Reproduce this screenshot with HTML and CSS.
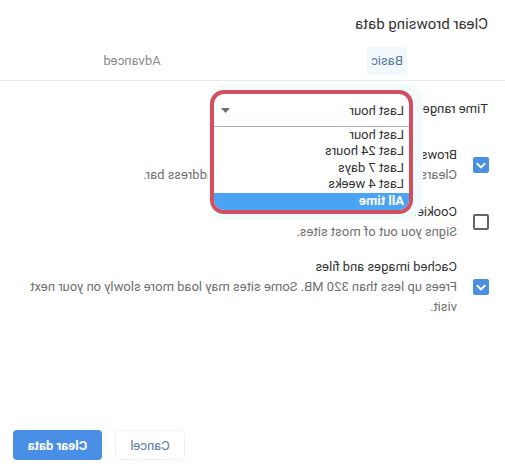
FILE: index.html
```html
<!DOCTYPE html>
<html>
<head>
<meta charset="utf-8">
<link rel="stylesheet" href="styles.css">
</head>
<body>
<div class="page">
  <div class="dialog">
    <div class="title">Clear browsing data</div>
    <div class="tabs">
      <div class="tab tab-basic active"><span class="tab-label">Basic</span></div>
      <div class="tab tab-adv"><span class="tab-label">Advanced</span></div>
    </div>
    <div class="content">
      <div class="time-row">
        <span class="label">Time range</span>
        <div class="select-wrap">
          <div class="popup">
            <div class="sel">
              <span>Last hour</span>
              <svg class="arrow" width="9" height="5" viewBox="0 0 9 5"><path d="M0 0H9L4.5 5Z" fill="#6b6b6b"/></svg>
            </div>
            <div class="list">
              <div class="item">Last hour</div>
              <div class="item">Last 24 hours</div>
              <div class="item">Last 7 days</div>
              <div class="item">Last 4 weeks</div>
              <div class="item selected">All time</div>
            </div>
          </div>
        </div>
      </div>
      <div class="opt opt-1">
        <div class="cb checked"><svg width="16" height="16" viewBox="0 0 16 16"><path d="M3.8 6.2L8 10.4L12.2 6.2" fill="none" stroke="#fff" stroke-width="2"/></svg></div>
        <div class="opt-text">
          <div class="opt-title">Browsing history</div>
          <div class="opt-sub">Clears history and autocompletions in the address bar.</div>
        </div>
      </div>
      <div class="opt opt-2">
        <div class="cb"></div>
        <div class="opt-text">
          <div class="opt-title">Cookies and other site data</div>
          <div class="opt-sub">Signs you out of most sites.</div>
        </div>
      </div>
      <div class="opt opt-3">
        <div class="cb checked"><svg width="16" height="16" viewBox="0 0 16 16"><path d="M3.8 6.2L8 10.4L12.2 6.2" fill="none" stroke="#fff" stroke-width="2"/></svg></div>
        <div class="opt-text">
          <div class="opt-title">Cached images and files</div>
          <div class="opt-sub">Frees up less than 320 MB. Some sites may load more slowly on your next visit.</div>
        </div>
      </div>
    </div>
    <div class="buttons">
      <button class="btn btn-cancel">Cancel</button>
      <button class="btn btn-primary">Clear data</button>
    </div>
  </div>
</div>
</body>
</html>
```

FILE: styles.css
```css
html, body {
  margin: 0;
  padding: 0;
  background: #fff;
  overflow: hidden;
}
.page {
  width: 505px;
  height: 472px;
  transform: scaleX(-1);
  font-family: Roboto, "Liberation Sans", sans-serif;
  color: #333;
}
.dialog {
  height: 472px;
  box-sizing: border-box;
  display: flex;
  flex-direction: column;
  padding-top: 14px;
  padding-bottom: 12px;
}
.title {
  font-size: 15px;
  line-height: 20px;
  padding-left: 17px;
  color: #333;
}
.tabs {
  margin-top: 8px;
  height: 38px;
  display: flex;
  border-bottom: 1px solid #e4ebf0;
}
.tab {
  font-size: 13px;
  line-height: 38px;
  display: flex;
  justify-content: center;
  align-items: center;
  color: #8a8a8a;
}
.tab-basic {
  width: 236px;
  color: #5878a0;
}
.tab-basic .tab-label {
  background: #f1f9fc;
  line-height: 28px;
  padding: 0 4px;
}
.tab-adv {
  width: 256px;
  margin-left: 9px;
}
.content {
  display: flex;
  flex-direction: column;
}
.time-row {
  display: flex;
  align-items: center;
  padding-top: 18px;
  height: 20px;
  margin-bottom: 26px;
  padding-left: 17px;
  font-size: 13px;
}
.label {
  width: 75px;
  color: #333;
  line-height: 20px;
}
.select-wrap {
  position: relative;
  height: 20px;
  width: 203px;
}
.popup {
  position: absolute;
  top: -9px;
  left: 0;
  width: 203px;
  height: 124px;
  box-sizing: border-box;
  border: 4px solid #d24f5f;
  border-radius: 14px;
  overflow: hidden;
  background: #fff;
  box-shadow: -4px 0 0 6px #f2fafc;
  z-index: 2;
}
.sel {
  height: 32px;
  display: flex;
  align-items: center;
  justify-content: space-between;
  padding-left: 5px;
  padding-right: 7px;
  border-bottom: 1px solid #a5adbd;
  font-size: 13px;
  color: #333;
}
.arrow {
  display: block;
}
.list {
  display: flex;
  flex-direction: column;
}
.item {
  height: 16.4px;
  line-height: 16.4px;
  padding-left: 5px;
  font-size: 13px;
  color: #333;
}
.item.selected {
  background: #4aa3f3;
  color: #fff;
  font-weight: bold;
  height: 17px;
}
.opt {
  display: flex;
  align-items: center;
  padding-left: 16px;
  font-size: 13px;
  line-height: 20px;
}
.opt-1 { margin-bottom: 17px; }
.opt-2 { margin-bottom: 15px; }
.cb {
  width: 16px;
  height: 16px;
  box-sizing: border-box;
  border: 2px solid #666;
  border-radius: 2px;
  flex: none;
  margin-right: 16px;
}
.cb.checked {
  border: none;
  background: #4a8fe2;
}
.cb svg {
  display: block;
}
.opt-text {
  width: 432px;
}
.opt-title {
  color: #333;
}
.opt-sub {
  color: #707070;
}
.buttons {
  margin-top: auto;
  display: flex;
  justify-content: flex-end;
  gap: 13px;
  padding-right: 13px;
}
.btn {
  height: 30px;
  font-family: Roboto, "Liberation Sans", sans-serif;
  font-size: 13px;
  border-radius: 4px;
  padding: 0;
  cursor: pointer;
}
.btn-cancel {
  width: 70px;
  background: #fff;
  border: 1px solid #eef2f5;
  color: #5a7aa3;
}
.btn-primary {
  width: 89px;
  background: #4a8fe6;
  border: none;
  color: #fff;
  font-weight: bold;
}
```
